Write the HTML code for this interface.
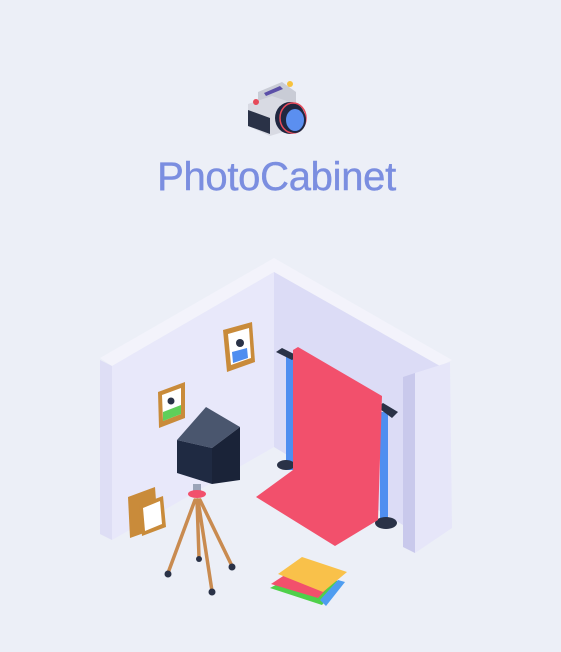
<!DOCTYPE html>
<html><head><meta charset="utf-8"><style>
html,body{margin:0;padding:0;background:#eceff7;width:561px;height:652px;overflow:hidden}
.t{position:absolute;left:-4px;width:561px;top:155px;text-align:center;font-family:"Liberation Sans",sans-serif;font-size:40px;color:#7b8ee0;letter-spacing:-0.3px;-webkit-text-stroke:0.4px #7b8ee0}
svg{position:absolute;left:0;top:0}
</style></head><body>
<svg width="561" height="652" viewBox="0 0 561 652">
<g>
<polygon points="258,92 282,82 296,92 296,108 258,108" fill="#c9ccd6"/>
<polygon points="264,93 280,86 283,89 266,96" fill="#5b4fa8"/>
<circle cx="290" cy="84" r="3" fill="#f7c23d"/>
<polygon points="248,104 272,96 296,104 296,128 270,136 248,126" fill="#d8dae3"/>
<polygon points="248,110 270,118 270,134 248,126" fill="#2a3247"/>
<circle cx="256" cy="102" r="3" fill="#e64a5a"/>
<ellipse cx="290" cy="118" rx="15" ry="16" fill="#1f2740"/>
<ellipse cx="293" cy="118" rx="13" ry="15" fill="none" stroke="#e64a5a" stroke-width="1.5"/>
<ellipse cx="295" cy="120" rx="10" ry="12" fill="#5b8ff0" stroke="#1f2740" stroke-width="2"/>
</g>
<polygon points="100,358 274,258 452,360 440,366 274,272 112,366" fill="#f3f3fb"/>
<polygon points="112,366 274,272 274,447 112,540" fill="#e8e8fa"/>
<polygon points="274,272 440,366 403,378 403,525 274,447" fill="#dcdcf6"/>
<polygon points="100,360 112,366 112,540 100,534" fill="#dedef5"/>
<polygon points="403,377 415,373 415,553 403,547" fill="#c9c9ec"/>
<polygon points="415,373 450,362 452,528 415,553" fill="#e6e6f9"/>
<rect x="286" y="355" width="8" height="115" fill="#4f8ef0"/>
<ellipse cx="286" cy="465" rx="9" ry="5" fill="#2a3247"/>
<polygon points="276,352 282,348 298,356 292,360" fill="#2a3247"/>
<rect x="380" y="412" width="8" height="108" fill="#4f8ef0"/>
<ellipse cx="386" cy="523" rx="11" ry="6" fill="#2a3247"/>
<polygon points="377,407 383,403 398,412 392,418" fill="#2a3247"/>
<polygon points="293,350 298,347 382,396 378,520 335,546 256,497 293,470" fill="#f2506c"/>
<polygon points="223,330 252,322 255,362 227,372" fill="#c98b3a"/>
<polygon points="228,334 249,328 251,358 231,365" fill="#fff"/>
<polygon points="232,352 247,348 248,358 233,363" fill="#4f8ef0"/>
<circle cx="240" cy="343" r="4" fill="#2a3247"/>
<polygon points="158,392 185,382 185,418 159,428" fill="#c98b3a"/>
<polygon points="162,395 181,388 181,414 163,421" fill="#fff"/>
<polygon points="163,412 181,405 181,414 163,421" fill="#5fcf5a"/>
<circle cx="171" cy="401" r="3.5" fill="#2a3247"/>
<polygon points="128,497 155,487 158,528 130,538" fill="#c98b3a"/>
<polygon points="139,505 163,496 166,527 142,536" fill="#c98b3a"/>
<polygon points="143,508 160,501 162,524 145,531" fill="#fff"/>
<polygon points="206,407 240,427 212,448 177,440" fill="#4a566e"/>
<polygon points="177,440 212,448 212,484 177,473" fill="#1f2a42"/>
<polygon points="212,448 240,427 240,480 212,484" fill="#1a2338"/>
<rect x="193" y="484" width="8" height="8" fill="#9aa3b8"/>
<ellipse cx="197" cy="494" rx="9" ry="4" fill="#f2506c"/>
<g stroke="#c98b50" stroke-width="3.5" stroke-linecap="round">
<line x1="195" y1="500" x2="168" y2="573"/>
<line x1="198" y1="500" x2="212" y2="591"/>
<line x1="200" y1="500" x2="232" y2="566"/>
<line x1="197" y1="500" x2="199" y2="557"/>
</g>
<g fill="#2a3247"><circle cx="168" cy="574" r="3.5"/><circle cx="212" cy="592" r="3.5"/><circle cx="232" cy="567" r="3.5"/><circle cx="199" cy="559" r="3"/></g>
<polygon points="270,588 300,572 342,582 322,605" fill="#4fd04a"/>
<polygon points="320,600 338,580 345,582 326,606" fill="#4f9df0"/>
<polygon points="271,584 300,565 338,577 318,598" fill="#f2506c"/>
<polygon points="278,574 302,557 347,572 323,592" fill="#f9c14a"/>
</svg>
<div class="t">PhotoCabinet</div>
</body></html>
